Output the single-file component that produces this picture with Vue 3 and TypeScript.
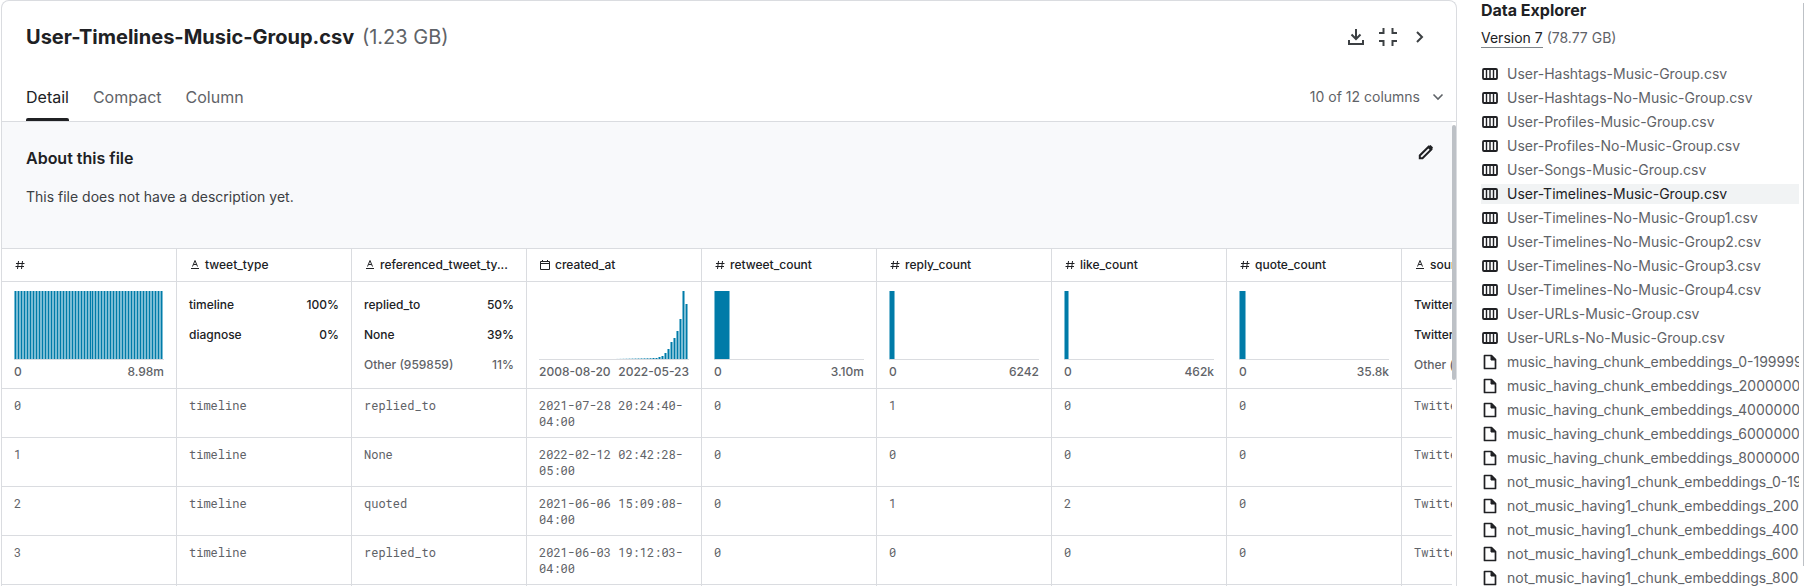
<script setup lang="ts">
type Kind = 'number' | 'text' | 'date'
interface Bar { x: number; w: number; h: number; faint?: number }
interface Share { label: string; value?: string; muted?: boolean }
interface Column {
  name: string
  kind: Kind
  bars?: Bar[]
  low?: string
  high?: string
  shares?: Share[]
}

const evenBars: Bar[] = Array.from({ length: 50 }, (_, i) => ({ x: i < 26 ? i * 3 : i * 3 - 1, w: 3, h: 68 }))
const dateHeights = [1, 1, 1, 1, 1, 1, 1, 1, 1, 1, 1, 1, 1, 1, 2, 3, 6, 10, 17, 21, 28, 40, 68, 55]
const dateBars: Bar[] = dateHeights.map((h, i) => ({
  x: 77 + i * 3,
  w: 3,
  h,
  faint: i < 12 ? (i + 1) / 16 : 1,
}))

const columns: Column[] = [
  { name: '', kind: 'number', bars: evenBars, low: '0', high: '8.98m' },
  { name: 'tweet_type', kind: 'text', shares: [{ label: 'timeline', value: '100%' }, { label: 'diagnose', value: '0%' }] },
  {
    name: 'referenced_tweet_ty...', kind: 'text', shares: [
      { label: 'replied_to', value: '50%' }, { label: 'None', value: '39%' }, { label: 'Other (959859)', value: '11%', muted: true },
    ],
  },
  { name: 'created_at', kind: 'date', bars: dateBars, low: '2008-08-20', high: '2022-05-23' },
  { name: 'retweet_count', kind: 'number', bars: [{ x: 0, w: 16, h: 68 }], low: '0', high: '3.10m' },
  { name: 'reply_count', kind: 'number', bars: [{ x: 0, w: 6, h: 68 }], low: '0', high: '6242' },
  { name: 'like_count', kind: 'number', bars: [{ x: 0, w: 5, h: 68 }], low: '0', high: '462k' },
  { name: 'quote_count', kind: 'number', bars: [{ x: 0, w: 7, h: 68 }], low: '0', high: '35.8k' },
  { name: 'source', kind: 'text', shares: [{ label: 'Twitter' }, { label: 'Twitter' }, { label: 'Other (', muted: true }] },
]

const rows: string[][] = [
  ['0', 'timeline', 'replied_to', '2021-07-28 20:24:40-04:00', '0', '1', '0', '0', 'Twitter'],
  ['1', 'timeline', 'None', '2022-02-12 02:42:28-05:00', '0', '0', '0', '0', 'Twitter'],
  ['2', 'timeline', 'quoted', '2021-06-06 15:09:08-04:00', '0', '1', '2', '0', 'Twitter'],
  ['3', 'timeline', 'replied_to', '2021-06-03 19:12:03-04:00', '0', '0', '0', '0', 'Twitter'],
]

const tables = [
  'User-Hashtags-Music-Group.csv', 'User-Hashtags-No-Music-Group.csv', 'User-Profiles-Music-Group.csv',
  'User-Profiles-No-Music-Group.csv', 'User-Songs-Music-Group.csv', 'User-Timelines-Music-Group.csv',
  'User-Timelines-No-Music-Group1.csv', 'User-Timelines-No-Music-Group2.csv', 'User-Timelines-No-Music-Group3.csv',
  'User-Timelines-No-Music-Group4.csv', 'User-URLs-Music-Group.csv', 'User-URLs-No-Music-Group.csv',
]
const documents = [
  'music_having_chunk_embeddings_0-1999999', 'music_having_chunk_embeddings_2000000', 'music_having_chunk_embeddings_4000000',
  'music_having_chunk_embeddings_6000000', 'music_having_chunk_embeddings_8000000', 'not_music_having1_chunk_embeddings_0-1999999',
  'not_music_having1_chunk_embeddings_2000000', 'not_music_having1_chunk_embeddings_4000000',
  'not_music_having1_chunk_embeddings_6000000', 'not_music_having1_chunk_embeddings_8000000',
]
const files = [
  ...tables.map((name) => ({ name, table: true })),
  ...documents.map((name) => ({ name, table: false })),
]
const selected = 'User-Timelines-Music-Group.csv'
const tabs = ['Detail', 'Compact', 'Column']
</script>

<template>
  <div class="page">
    <main class="panel">
      <header class="head">
        <h1>User-Timelines-Music-Group.csv <span>(1.23 GB)</span></h1>
        <div class="actions">
          <button type="button" aria-label="Download">
            <svg viewBox="0 0 20 20"><path d="M10 2v9.500M5.500 7.500l4.500 4.500 4.500-4.500M3 13v4h14v-4" /></svg>
          </button>
          <button type="button" aria-label="Exit full screen">
            <svg viewBox="0 0 20 20"><path d="M1 6h4.500V1M19 6h-4.500V1M1 14h4.500v5M19 14h-4.500v5" /></svg>
          </button>
          <button type="button" aria-label="Next file">
            <svg viewBox="0 0 20 20"><path d="M7 5l5 5-5 5" /></svg>
          </button>
        </div>
      </header>

      <nav class="tabs">
        <button v-for="tab in tabs" :key="tab" type="button" :class="{ active: tab === 'Detail' }">{{ tab }}</button>
        <button type="button" class="columns">
          10 of 12 columns
          <svg viewBox="0 0 12 12"><path d="M1.500 3.500L6 8l4.500-4.500" /></svg>
        </button>
      </nav>

      <div class="body">
        <div class="scroll">
          <section class="about">
            <div>
              <h2>About this file</h2>
              <p>This file does not have a description yet.</p>
            </div>
            <button type="button" aria-label="Edit description">
              <svg viewBox="0 0 16 16">
                <path class="pen" d="M1.800 14.200v-2.700L10.600 2.700l2.700 2.700-8.800 8.800z" />
                <path class="tip" d="M9.500 3.500l2.100-2.100q.7-.7 1.400 0l1.600 1.600q.7.7 0 1.400l-2.100 2.100z" />
              </svg>
            </button>
          </section>

          <table>
            <thead>
              <tr>
                <th v-for="col in columns" :key="col.name" scope="col">
                  <div class="name">
                    <svg v-if="col.kind === 'number'" viewBox="0 0 12 12"><path d="M4.500 2l-1 8M8.500 2l-1 8M2 4.500h8.500M1.500 7.500H10" /></svg>
                    <svg v-else-if="col.kind === 'text'" viewBox="0 0 12 12"><path d="M3.500 7.500L6 1.500l2.500 6M4.500 5.500h3M2 9.500h8" /></svg>
                    <svg v-else viewBox="0 0 12 12"><path d="M1.500 2.500h9v8h-9zM1.500 4.500h9M3.500 1v2M8.500 1v2" /></svg>
                    <span v-if="col.name">{{ col.name }}</span>
                  </div>
                </th>
              </tr>
              <tr class="summary">
                <td v-for="col in columns" :key="col.name">
                  <template v-if="col.bars">
                    <svg class="chart" viewBox="0 0 150 68" preserveAspectRatio="none">
                      <g v-for="bar in col.bars" :key="bar.x" :opacity="bar.faint ?? 1">
                        <rect class="edge" :x="bar.x" :y="68 - bar.h" :width="bar.w" :height="bar.h" />
                        <rect class="core" :x="bar.x + 1" :y="68 - bar.h" :width="bar.w - 2" :height="bar.h" />
                      </g>
                    </svg>
                    <div class="range"><span>{{ col.low }}</span><span>{{ col.high }}</span></div>
                  </template>
                  <ul v-else>
                    <li v-for="(share, i) in col.shares" :key="i" :class="{ muted: share.muted }">
                      <span>{{ share.label }}</span><span v-if="share.value">{{ share.value }}</span>
                    </li>
                  </ul>
                </td>
              </tr>
            </thead>
            <tbody>
              <tr v-for="row in rows" :key="row[0]">
                <td v-for="(cell, i) in row" :key="i">{{ cell }}</td>
              </tr>
              <tr><td v-for="col in columns" :key="col.name"></td></tr>
            </tbody>
          </table>
        </div>
        <div class="track"><div class="thumb"></div></div>
      </div>
    </main>

    <aside>
      <h2>Data Explorer</h2>
      <p class="version"><button type="button">Version 7</button> (78.77 GB)</p>
      <ul>
        <li v-for="file in files" :key="file.name" :class="{ selected: file.name === selected }">
          <a href="#">
            <svg v-if="file.table" viewBox="0 0 16 14"><rect class="grid" x="1" y="2" width="14" height="10" rx="1" /><path class="rules" d="M4.500 2v10M8 2v10M11.500 2v10" /></svg>
            <svg v-else class="doc" viewBox="0 0 16 16"><path d="M3.500 1.500h6l4 4v9h-11v-13z" /><path class="fold" d="M9 1.500V6h4.500z" /></svg>
            <span>{{ file.name }}</span>
          </a>
        </li>
      </ul>
    </aside>
    <div class="rail"></div>
  </div>
</template>

<style>
html, body { margin: 0; background: #fff; overflow: hidden; }
</style>

<style scoped>
* { box-sizing: border-box; }
.page {
  display: flex;
  height: 100vh;
  padding-left: 1px;
  overflow: hidden;
  font-family: Inter, sans-serif;
  color: #202124;
}
h1, h2, p, ul { margin: 0; padding: 0; list-style: none; }
button { font: inherit; color: inherit; background: none; border: 0; padding: 0; cursor: pointer; }
svg { display: block; flex: none; fill: none; stroke: currentColor; }

.panel {
  flex: 1;
  min-width: 0;
  display: flex;
  flex-direction: column;
  border: 1px solid #dadce0;
  border-bottom: 0;
  border-radius: 8px 8px 0 0;
  overflow: hidden;
}
.head { display: flex; align-items: center; justify-content: space-between; height: 72px; padding: 0 26px 0 24px; }
h1 { font-size: 20px; line-height: 24px; font-weight: 700; }
h1 span { font-weight: 400; color: #5f6368; margin-left: 3px; }
.actions { display: flex; gap: 12px; color: #3c4043; }
.actions svg { width: 20px; height: 20px; stroke-width: 2; }

.tabs { display: flex; gap: 24px; height: 49px; padding: 0 12px 0 24px; border-bottom: 1px solid #dadce0; font-size: 16px; line-height: 48px; color: #5f6368; }
.tabs button { height: 48px; }
.tabs .active { color: #202124; }
.tabs .active::after { content: ""; display: block; height: 3px; margin-top: -3px; border-radius: 2px 2px 0 0; background: #202124; }
.tabs .columns { display: flex; align-items: center; gap: 12px; margin-left: auto; font-size: 14px; }
.columns svg { width: 12px; height: 12px; stroke-width: 1.6; }

.body { flex: 1; min-height: 0; display: flex; }
.scroll { flex: 1; min-width: 0; overflow: hidden; }
.about { display: flex; justify-content: space-between; align-items: flex-start; height: 126px; padding: 22px 18px 22px 24px; background: #f8f9fb; }
.about h2 { margin-top: 2px; font-size: 16px; line-height: 24px; font-weight: 600; }
.about p { margin-top: 16px; font-size: 14px; line-height: 22px; color: #3c4043; }
.about svg { width: 16px; height: 16px; }
.pen { stroke-width: 2; }
.tip { fill: currentColor; stroke: none; }

table { width: 1575px; table-layout: fixed; border-collapse: separate; border-spacing: 0; border-top: 1px solid #dadce0; }
th, td { border-right: 1px solid #dadce0; border-bottom: 1px solid #dadce0; text-align: left; vertical-align: top; }
th { height: 33px; padding: 0 12px; }
.name { display: flex; align-items: center; gap: 4px; height: 32px; font-size: 12px; font-weight: 500; line-height: 16px; }
.name svg { width: 12px; height: 12px; }
.name span { white-space: nowrap; }
.summary td { height: 107px; padding: 8px 12px 0; font-size: 12px; line-height: 16px; }
.chart { width: 100%; height: 69px; margin-top: 1px; border-bottom: 1px solid #dadce0; stroke: none; shape-rendering: crispEdges; }
.edge { fill: #7abcd4; }
.core { fill: #007ba8; }
.range { display: flex; justify-content: space-between; margin-top: 4px; color: #5f6368; white-space: nowrap; font-weight: 500; }
.summary li { display: flex; justify-content: space-between; height: 30px; line-height: 30px; font-weight: 500; white-space: nowrap; }
.summary li.muted { color: #5f6368; }
tbody td { height: 49px; padding: 8px 12px; font-family: "Roboto Mono", "DejaVu Sans Mono", monospace; font-size: 12px; line-height: 16px; color: #5f6368; }
.track { flex: none; width: 4px; padding-top: 3px; }
.thumb { height: 255px; border-radius: 2px; background: #bdc1c6; }

aside { flex: none; width: 342px; padding-left: 24px; font-size: 14px; line-height: 20px; color: #5f6368; }
aside h2 { font-size: 16px; line-height: 20px; font-weight: 700; color: #202124; }
.version { margin: 8px 0 16px; }
.version button { color: #202124; line-height: 19px; border-bottom: 1px solid #80868b; }
aside li { margin-bottom: 4px; }
aside a { display: flex; align-items: center; gap: 9px; height: 20px; padding-left: 1px; color: inherit; text-decoration: none; white-space: nowrap; overflow: hidden; }
aside a svg { width: 16px; height: 14px; color: #202124; }
aside a .doc { height: 16px; stroke-width: 1.7; stroke-linejoin: round; }
.grid { stroke-width: 1.8; }
.rules { stroke-width: 1.4; }
.fold { fill: currentColor; stroke-width: 1; }
.selected a { background: #f1f3f4; color: #202124; }
.rail { flex: none; width: 1px; height: 563px; margin: 3px 0 0 4px; background: #bdc1c6; }
</style>
